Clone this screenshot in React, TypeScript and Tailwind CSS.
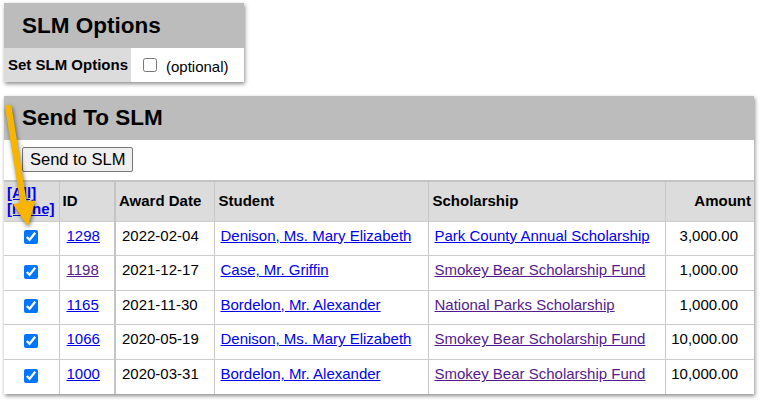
import React from "react"

const rows = [
  { id: "1298", date: "2022-02-04", student: "Denison, Ms. Mary Elizabeth", scholarship: "Park County Annual Scholarship", amount: "3,000.00", idVisited: false, schVisited: false },
  { id: "1198", date: "2021-12-17", student: "Case, Mr. Griffin", scholarship: "Smokey Bear Scholarship Fund", amount: "1,000.00", idVisited: true, schVisited: true },
  { id: "1165", date: "2021-11-30", student: "Bordelon, Mr. Alexander", scholarship: "National Parks Scholarship", amount: "1,000.00", idVisited: false, schVisited: true },
  { id: "1066", date: "2020-05-19", student: "Denison, Ms. Mary Elizabeth", scholarship: "Smokey Bear Scholarship Fund", amount: "10,000.00", idVisited: false, schVisited: true },
  { id: "1000", date: "2020-03-31", student: "Bordelon, Mr. Alexander", scholarship: "Smokey Bear Scholarship Fund", amount: "10,000.00", idVisited: false, schVisited: true },
]

function Arrow() {
  return (
    <svg
      className="pointer-events-none absolute left-0 top-0 drop-shadow-[1px_2px_2px_rgba(0,0,0,0.55)]"
      width="60"
      height="240"
      viewBox="0 0 60 240"
    >
      <line x1="8.5" y1="108" x2="24" y2="206" stroke="#f7b500" strokeWidth="6.5" strokeLinecap="round" />
      <polygon points="14.5,205 34,201.5 27.5,224" fill="#f7b500" stroke="#f7b500" strokeWidth="2" strokeLinejoin="round" />
    </svg>
  )
}

export default function App() {
  return (
    <div className="relative min-h-[404px] bg-white pl-[4px] pt-[3px] font-['Liberation_Sans',Arial,sans-serif] text-[15px] text-black">
      {/* SLM Options */}
      <div className="w-[240px] bg-white shadow-[1px_2px_4px_rgba(0,0,0,0.45)]">
        <div className="flex h-[45px] items-center bg-[#bcbcbc] pl-[18px] text-[22.5px] font-bold">
          SLM Options
        </div>
        <div className="flex h-[34px]">
          <div className="flex w-[127px] items-center bg-[#dcdcdc] pl-[4px] font-bold">
            Set SLM Options
          </div>
          <div className="flex items-center pl-[12px]">
            <input type="checkbox" className="m-0 h-[14px] w-[14px]" />
            <span className="ml-[9px] mt-[4px]">(optional)</span>
          </div>
        </div>
      </div>

      {/* Send To SLM */}
      <div className="mt-[14px] w-[750px] bg-white shadow-[1px_2px_4px_rgba(0,0,0,0.45)]">
        <div className="flex h-[44px] items-center bg-[#bcbcbc] pl-[18px] text-[22.5px] font-bold">
          Send To SLM
        </div>
        <div className="flex h-[40px] items-start pl-[18px] pt-[7px]">
          <button className="h-[25px] rounded-[2px] border border-[#767676] bg-[#efefef] px-[7px] text-[16.5px] leading-none">
            Send to SLM
          </button>
        </div>
        <table className="w-full table-fixed border-collapse">
          <colgroup>
            <col className="w-[55px]" />
            <col className="w-[56px]" />
            <col className="w-[99px]" />
            <col className="w-[214px]" />
            <col className="w-[237px]" />
            <col className="w-[89px]" />
          </colgroup>
          <thead>
            <tr className="h-[40px] border-t-2 border-[#c4c4c4] bg-[#dcdcdc] text-left font-bold">
              <th className="border-r border-[#c8c8c8] pl-[3px] text-left align-middle leading-[16px]">
                <a className="block text-[#0000ee] underline">[All]</a>
                <a className="block text-[#0000ee] underline">[None]</a>
              </th>
              <th className="border-r-2 border-[#c4c4c4] pl-[3px] text-left">ID</th>
              <th className="border-r border-[#c8c8c8] pl-[3px] text-left">Award Date</th>
              <th className="border-r border-[#c8c8c8] pl-[4px] text-left">Student</th>
              <th className="border-r border-[#c8c8c8] pl-[4px] text-left">Scholarship</th>
              <th className="pr-[3px] text-right">Amount</th>
            </tr>
          </thead>
          <tbody>
            {rows.map((r) => (
              <tr key={r.id} className="h-[34.6px] border-t border-[#cccccc]">
                <td className="border-r border-[#c8c8c8] text-center align-middle">
                  <input type="checkbox" defaultChecked className="m-0 mt-[4px] h-[14px] w-[14px] accent-[#0075ff]" />
                </td>
                <td className="border-r-2 border-[#c4c4c4] pb-[5px] pl-[7px]">
                  <a className={r.idVisited ? "text-[#551a8b] underline" : "text-[#0000ee] underline"}>{r.id}</a>
                </td>
                <td className="border-r border-[#c8c8c8] pb-[5px] pl-[6px]">{r.date}</td>
                <td className="border-r border-[#c8c8c8] pb-[5px] pl-[6px]">
                  <a className="text-[#0000ee] underline">{r.student}</a>
                </td>
                <td className="border-r border-[#c8c8c8] pb-[5px] pl-[6px]">
                  <a className={r.schVisited ? "text-[#551a8b] underline" : "text-[#0000ee] underline"}>{r.scholarship}</a>
                </td>
                <td className="pb-[5px] pr-[16px] text-right">{r.amount}</td>
              </tr>
            ))}
          </tbody>
        </table>
      </div>

      <Arrow />
    </div>
  )
}
